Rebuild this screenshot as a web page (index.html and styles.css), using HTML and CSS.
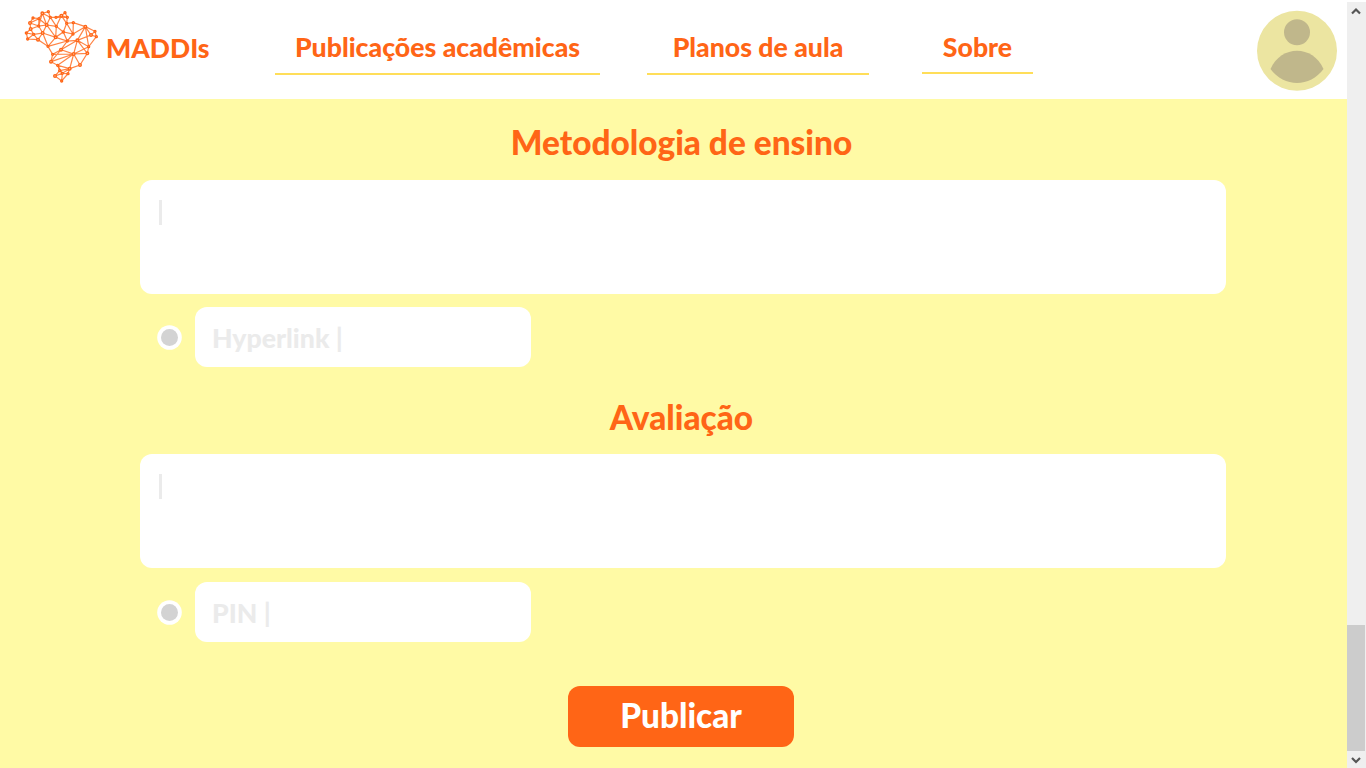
FILE: index.html
```html
<!DOCTYPE html>
<html lang="pt-BR">
<head>
<meta charset="utf-8">
<title>MADDIs</title>
<link rel="stylesheet" href="styles.css">
</head>
<body>
<div class="page">
  <header class="header">
    <svg class="logo" viewBox="0 0 270 264" fill="none">
      <g class="logo-lines">
        <path d="M79 28L97 23L103 40L79 28L69 44L51 42L42 57L44 75L31 87L35 105L66 107L96 127L110 151L105 173L125 184L131 200L117 216L137 231L156 209L139 208L131 200L161 194L192 183L214 148L218 128L241 98L237 82L208 68L172 56L152 58L154 40L147 26L136 35L120 40L103 40"/>
        <path d="M79 28L92 63L103 40L121 67L136 35L154 40L120 40M136 35L152 58L142 84L121 67L92 63L68 66L69 44L42 57L68 66L44 75L53 91L31 87M79 28L68 66L80 87L53 91L35 105M53 91L66 107L80 87L92 63L119 100L121 67M69 44L92 63M80 87L119 100L142 84L171 90L172 56M152 58L171 90L208 68L184 109L154 111L142 84M119 100L154 111L171 90M80 87L96 127L119 100M96 127L154 111L135 137L184 109L173 150L135 137L105 173L173 150L110 151L135 137M208 68L225 93L241 98M225 93L237 82M184 109L225 93M184 109L218 128L208 68M184 109L214 148L173 150L192 183M173 150L161 194L125 184L173 150M218 128L173 150M161 194L156 209M161 194L139 208L137 231M125 184L139 208L117 216"/>
      </g>
      <g class="logo-nodes">
        <circle cx="79" cy="28" r="4"/><circle cx="97" cy="23" r="3"/><circle cx="51" cy="42" r="3"/><circle cx="69" cy="44" r="3"/><circle cx="42" cy="57" r="4"/><circle cx="44" cy="75" r="4"/><circle cx="31" cy="87" r="3"/><circle cx="53" cy="91" r="3"/><circle cx="35" cy="105" r="3"/><circle cx="66" cy="107" r="4"/><circle cx="68" cy="66" r="3"/><circle cx="92" cy="63" r="4"/><circle cx="80" cy="87" r="4"/><circle cx="103" cy="40" r="3"/><circle cx="120" cy="40" r="3"/><circle cx="136" cy="35" r="4"/><circle cx="147" cy="26" r="3"/><circle cx="154" cy="40" r="3"/><circle cx="152" cy="58" r="3"/><circle cx="121" cy="67" r="3"/><circle cx="119" cy="100" r="4"/><circle cx="142" cy="84" r="3"/><circle cx="172" cy="56" r="3"/><circle cx="171" cy="90" r="3"/><circle cx="154" cy="111" r="3"/><circle cx="184" cy="109" r="4"/><circle cx="208" cy="68" r="4"/><circle cx="237" cy="82" r="3"/><circle cx="225" cy="93" r="4"/><circle cx="241" cy="98" r="3"/><circle cx="218" cy="128" r="3"/><circle cx="214" cy="148" r="4"/><circle cx="173" cy="150" r="4"/><circle cx="135" cy="137" r="4"/><circle cx="96" cy="127" r="3"/><circle cx="110" cy="151" r="3"/><circle cx="105" cy="173" r="4"/><circle cx="125" cy="184" r="3"/><circle cx="161" cy="194" r="4"/><circle cx="192" cy="183" r="4"/><circle cx="131" cy="200" r="3"/><circle cx="139" cy="208" r="3"/><circle cx="156" cy="209" r="3"/><circle cx="117" cy="216" r="4"/><circle cx="137" cy="231" r="3"/>
      </g>
    </svg>
    <span class="brand">MADDIs</span>
    <nav class="nav">
      <a class="link link-pubs">Publicações acadêmicas</a>
      <a class="link link-plans">Planos de aula</a>
      <a class="link link-about">Sobre</a>
    </nav>
    <svg class="avatar" viewBox="0 0 80 80">
      <circle cx="40" cy="39.700" r="40" fill="#ece5a1"/>
      <circle cx="40" cy="21.300" r="13" fill="#c0b78b"/>
      <path d="M13.500 58C24 33.500 56 33.500 66.500 58C53 76.500 27 76.500 13.500 58Z" fill="#c0b78b"/>
    </svg>
  </header>
  <main class="main">
    <h2 class="title">Metodologia de ensino</h2>
    <div class="area"><i class="caret"></i></div>
    <div class="option"><svg class="radio" viewBox="0 0 25 25"><circle cx="12.500" cy="12.500" r="12.300" fill="#fff"/><circle cx="12.500" cy="12.500" r="8.500" fill="#d3d3d3"/></svg><div class="field">Hyperlink |</div></div>
    <h2 class="title title-second">Avaliação</h2>
    <div class="area"><i class="caret"></i></div>
    <div class="option option-second"><svg class="radio" viewBox="0 0 25 25"><circle cx="12.500" cy="12.500" r="12.300" fill="#fff"/><circle cx="12.500" cy="12.500" r="8.500" fill="#d3d3d3"/></svg><div class="field">PIN |</div></div>
    <button class="submit">Publicar</button>
  </main>
</div>
<div class="scrollbar">
  <svg class="arrow" viewBox="0 0 10 8"><path d="M1 6.500L5 2.500L9 6.500"/></svg>
  <div class="thumb"></div>
  <svg class="arrow" viewBox="0 0 10 8"><path d="M1 2L5 6L9 2"/></svg>
</div>
</body>
</html>
```
FILE: styles.css
```css
* { box-sizing: border-box; }
body {
  margin: 0;
  width: 1366px;
  height: 768px;
  display: flex;
  overflow: hidden;
  background: #fff;
  color: #ff6516;
  font-family: Lato, sans-serif;
  font-weight: 900;
}
.page { width: 1347px; height: 768px; display: flex; flex-direction: column; }
.header { height: 99px; flex: none; display: flex; align-items: flex-start; padding: 4px 10px 0 16px; }
.logo { width: 90px; height: 88px; flex: none; }
.logo-lines { stroke: #ff6516; stroke-width: 3.600; stroke-opacity: .8; }
.logo-nodes { fill: #ffc3a2; stroke: #ff6516; stroke-width: 4; }
.brand { width: 169px; margin-top: 28px; font-size: 26.500px; line-height: 32px; white-space: nowrap; }
.nav { display: flex; flex: 1; margin-top: 27px; }
.link {
  height: 44px;
  font-size: 26.670px;
  line-height: 32px;
  text-align: center;
  white-space: nowrap;
  border-bottom: 2px solid #ffde59;
}
.link-pubs { width: 325px; }
.link-plans { width: 222px; margin-left: 47px; }
.link-about { width: 111px; height: 43px; margin-left: 53px; }
.avatar { width: 80px; height: 80px; margin-top: 7px; overflow: visible; }
.main { height: 669px; padding: 24px 0 0 140px; background: #fffaa5; }
.title { margin: 0; width: 1083px; height: 56.500px; text-align: center; font-size: 33.400px; font-weight: 900; line-height: 39px; }
.area { width: 1086px; height: 114px; padding: 20.500px 19px; border-radius: 12px; background: #fff; }
.caret { display: block; width: 3px; height: 25px; background: #ebebeb; }
.option { display: flex; align-items: center; margin-top: 13.500px; padding-left: 17px; }
.radio { width: 25px; height: 25px; margin-right: 13px; }
.field { width: 336px; height: 60px; padding: 0 17px; border-radius: 12px; background: #fff; color: #ebebeb; font-size: 26.670px; line-height: 63px; }
.title-second { height: 55.500px; margin-top: 31px; }
.option-second { margin-top: 14.500px; }
.submit {
  display: block;
  width: 226px;
  height: 60.500px;
  margin: 44px 0 0 428px;
  padding: 0 0 3px;
  border: 0;
  border-radius: 12px;
  background: #ff6516;
  color: #fff;
  font: 900 33.300px/56px Lato, sans-serif;
}
.scrollbar { width: 19px; height: 766px; margin-top: 2px; background: #efefef; display: flex; flex-direction: column; align-items: flex-start; }
.arrow { width: 10px; height: 8px; flex: none; margin: 5px 0 0 4px; fill: none; stroke: #555; stroke-width: 2.200; }
.thumb { width: 18px; height: 126px; margin-top: 610px; background: #ccc; }
```
